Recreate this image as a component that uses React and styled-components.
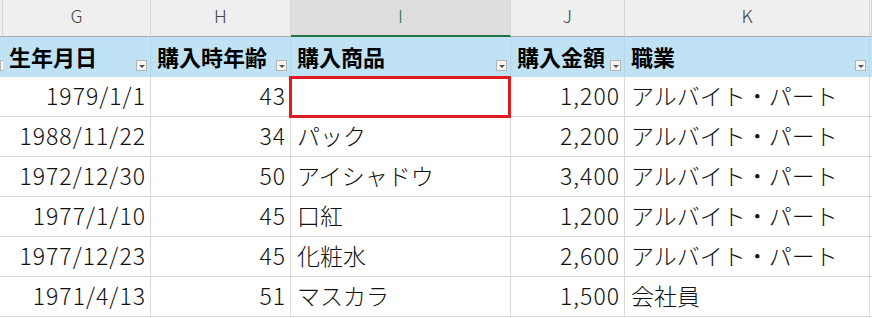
import React from "react";
import styled, { createGlobalStyle, css } from "styled-components";

const GlobalStyle = createGlobalStyle`
  html, body {
    margin: 0;
    padding: 0;
    background: #ffffff;
  }

  body {
    font-family: "Noto Sans CJK JP", "Noto Sans", sans-serif;
    overflow: hidden;
  }
`;

const columns = [
  { key: "F", width: 3 },
  { key: "G", width: 148, title: "生年月日", align: "right" },
  { key: "H", width: 140, title: "購入時年齢", align: "right" },
  { key: "I", width: 220, title: "購入商品", align: "left", active: true },
  { key: "J", width: 114, title: "購入金額", align: "right" },
  { key: "K", width: 245, title: "職業", align: "left" },
  { key: "L", width: 2 },
];

const rows = [
  ["1979/1/1", "43", "", "1,200", "アルバイト・パート"],
  ["1988/11/22", "34", "パック", "2,200", "アルバイト・パート"],
  ["1972/12/30", "50", "アイシャドウ", "3,400", "アルバイト・パート"],
  ["1977/1/10", "45", "口紅", "1,200", "アルバイト・パート"],
  ["1977/12/23", "45", "化粧水", "2,600", "アルバイト・パート"],
  ["1971/4/13", "51", "マスカラ", "1,500", "会社員"],
];

const Sheet = styled.div`
  display: grid;
  grid-template-columns: ${columns.map((c) => `${c.width}px`).join(" ")};
  grid-auto-rows: 40px;
  grid-template-rows: 37px;
  width: 872px;
`;

const ColHead = styled.div`
  box-sizing: border-box;
  display: flex;
  align-items: flex-start;
  justify-content: center;
  padding-top: 2px;

  background: #efefef;
  border-right: 1px solid #d6d6d6;
  border-bottom: 1px solid #ababab;

  font-family: "Noto Sans CJK JP", "Noto Sans", sans-serif;
  font-size: 18px;
  font-weight: 300;
  color: #444444;

  ${({ active }) => active && css`
    background: #dedede;
    color: #217346;
    border-bottom: 2px solid #217346;
  `}
`;

const HeadCell = styled.div`
  position: relative;
  box-sizing: border-box;
  display: flex;
  align-items: center;
  padding: 0 5px 2px 6px;
  overflow: hidden;

  background: #bfe3f4;
  border-right: 1px solid #b3d8ea;

  font-size: 22px;
  font-weight: 700;
  color: #000000;
  white-space: nowrap;
`;

const Filter = styled.span`
  position: absolute;
  right: ${({ edge }) => (edge ? "0" : "3px")};
  bottom: 6px;
  width: 11px;
  height: 11px;
  box-sizing: border-box;

  background: #f4f4f4;
  border: 1px solid #b4b4b4;

  &:after {
    content: "";
    position: absolute;
    left: 2px;
    top: 4px;
    border-left: 3px solid transparent;
    border-right: 3px solid transparent;
    border-top: 3px solid #555555;
  }
`;

const Cell = styled.div`
  position: relative;
  box-sizing: border-box;
  display: flex;
  align-items: center;
  justify-content: ${({ align }) => (align === "right" ? "flex-end" : "flex-start")};
  padding: 0 ${({ align }) => (align === "right" ? "4px" : "5px")} 3px 6px;
  overflow: hidden;

  background: #ffffff;
  border-right: 1px solid #d9d9d9;
  border-bottom: 1px solid #d9d9d9;

  font-size: 23px;
  font-weight: 300;
  letter-spacing: ${({ align }) => (align === "right" ? "1px" : "0")};
  color: #111111;
  white-space: nowrap;
`;

const Selection = styled.div`
  position: absolute;
  left: -2px;
  top: -1px;
  right: -1px;
  bottom: -2px;
  border: 3px solid #e11b1d;
  pointer-events: none;
`;

const SelectedWrap = styled(Cell)`
  overflow: visible;
  z-index: 1;
`;

const App = () => (
  <>
    <GlobalStyle />
    <Sheet>
      {columns.map((c) => (
        <ColHead key={`c-${c.key}`} active={c.active}>
          {c.title ? c.key : ""}
        </ColHead>
      ))}

      {columns.map((c) => (
        <HeadCell key={`h-${c.key}`}>
          {c.title}
          {(c.title || c.key === "F") && <Filter edge={c.key === "F"} />}
        </HeadCell>
      ))}

      {rows.map((row, r) => (
        <React.Fragment key={r}>
          <Cell />
          {row.map((value, i) => {
            const col = columns[i + 1];
            if (r === 0 && col.active) {
              return (
                <SelectedWrap key={col.key} align={col.align}>
                  {value}
                  <Selection />
                </SelectedWrap>
              );
            }
            return (
              <Cell key={col.key} align={col.align}>
                {value}
              </Cell>
            );
          })}
          <Cell />
        </React.Fragment>
      ))}
    </Sheet>
  </>
);

export default App;
